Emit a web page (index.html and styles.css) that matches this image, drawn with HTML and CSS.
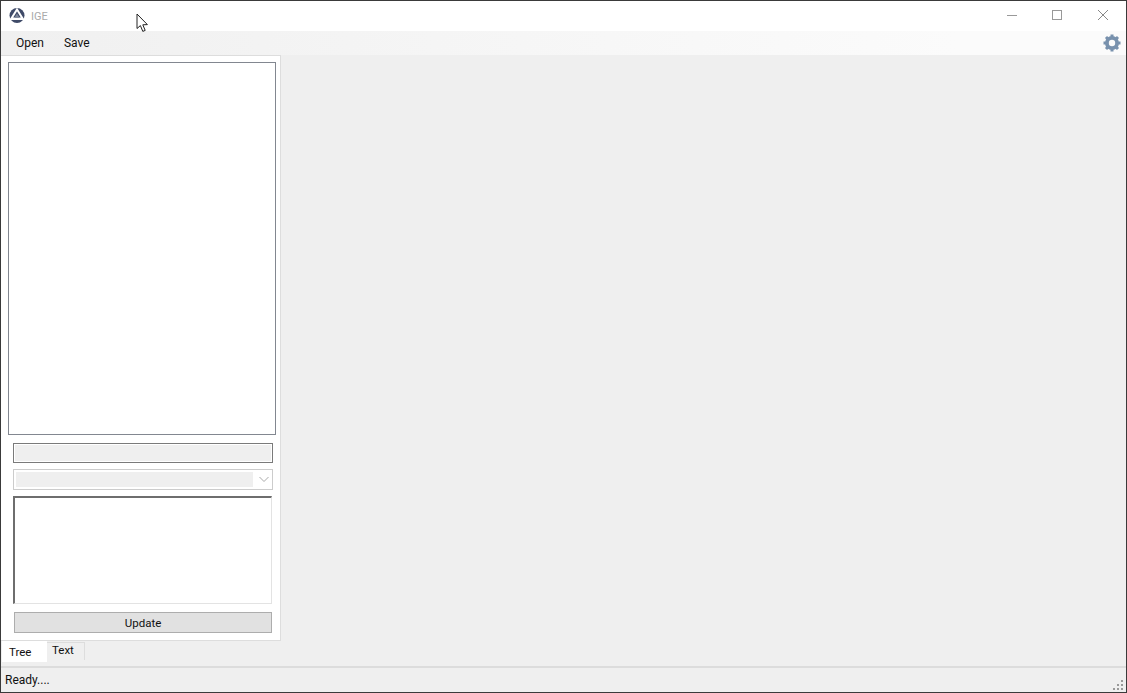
FILE: index.html
```html
<!DOCTYPE html>
<html lang="en">
<head>
    <meta charset="UTF-8">
    <title>IGE</title>
    <link rel="stylesheet" href="styles.css">
</head>
<body>
    <div class="window">
        <div class="titlebar">
            <svg class="logo" width="16" height="16" viewBox="0 0 16 16">
                <circle cx="8" cy="7.5" r="7.5" fill="#3f4a68"/>
                <path d="M8 1.5 L13.6 10.5 H2.4 Z" fill="none" stroke="#fff" stroke-width="2"/>
                <path d="M8 5.5 L10.6 9.8 H5.4 Z" fill="#7d8699"/>
                <path d="M0 11 H16 V12 H0 Z" fill="#fff"/>
            </svg>
            <span class="title">IGE</span>
            <svg class="cursor" width="14" height="20" viewBox="0 0 14 20">
                <path d="M1 1 V15.5 L4.4 12.6 L6.8 18.4 L9.2 17.4 L6.8 11.8 L11.4 11.6 Z" fill="#fff" stroke="#222" stroke-width="1"/>
            </svg>
            <div class="winbtns">
                <svg width="12" height="12" viewBox="0 0 12 12"><path d="M1 5.5 H11" stroke="#999" fill="none"/></svg>
                <svg width="12" height="12" viewBox="0 0 12 12"><rect x="1.5" y="0.5" width="9" height="9" stroke="#999" fill="none"/></svg>
                <svg width="12" height="12" viewBox="0 0 12 12"><path d="M1 0 L11 10 M11 0 L1 10" stroke="#888" fill="none"/></svg>
            </div>
        </div>
        <div class="menubar">
            <span class="menuitem">Open</span>
            <span class="menuitem">Save</span>
            <svg class="gear" width="18" height="18" viewBox="0 0 18 18">
                <circle cx="9" cy="9" r="5.2" fill="none" stroke="#7891ad" stroke-width="3.6"/>
                <path d="M9 0.5 V17.5 M0.5 9 H17.5 M3 3 L15 15 M15 3 L3 15" stroke="#7891ad" stroke-width="3"/>
                <circle cx="9" cy="9" r="3.2" fill="#fafafa"/>
            </svg>
        </div>
        <div class="content">
            <div class="sidebar">
                <div class="panel">
                    <div class="tree"></div>
                    <div class="field"></div>
                    <div class="combo">
                        <div class="combo-value"></div>
                        <svg width="12" height="7" viewBox="0 0 12 7"><path d="M1.5 1 L6 5.5 L10.5 1" stroke="#aaa" fill="none"/></svg>
                    </div>
                    <div class="memo"></div>
                    <div class="button">Update</div>
                </div>
                <div class="tabs">
                    <span class="tab active">Tree</span>
                    <span class="tab">Text</span>
                </div>
            </div>
        </div>
        <div class="statusbar">
            <span>Ready....</span>
            <svg class="grip" width="11" height="11" viewBox="0 0 11 11" fill="#999">
                <rect x="8" y="0" width="2" height="2"/>
                <rect x="4" y="4" width="2" height="2"/>
                <rect x="8" y="4" width="2" height="2"/>
                <rect x="0" y="8" width="2" height="2"/>
                <rect x="4" y="8" width="2" height="2"/>
                <rect x="8" y="8" width="2" height="2"/>
            </svg>
        </div>
    </div>
</body>
</html>
```
FILE: styles.css
```css
html, body {
    margin: 0;
    height: 100%;
    overflow: hidden;
}

body {
    font-family: Roboto, "Liberation Sans", sans-serif;
    font-size: 12px;
    color: #111;
}

.window {
    box-sizing: border-box;
    width: 1127px;
    height: 693px;
    border: 1px solid #3a3a3a;
    background: #efefef;
    display: flex;
    flex-direction: column;
    position: relative;
}

.titlebar {
    height: 30px;
    flex: none;
    background: #fff;
    display: flex;
    align-items: center;
    padding-left: 8px;
}

.logo {
    margin-right: 6px;
}

.title {
    color: #aaa;
    font-size: 11px;
}

.cursor {
    position: absolute;
    left: 135px;
    top: 12px;
}

.winbtns {
    margin-left: auto;
    display: flex;
    gap: 34px;
    padding-right: 17px;
}

.winbtns svg:first-child {
    margin-right: -1px;
}

.menubar {
    height: 24px;
    flex: none;
    display: flex;
    align-items: center;
    background: linear-gradient(90deg, #f0f0f0 0%, #fbfbfb 85%, #fbfbfb 100%);
    padding-left: 15px;
    gap: 20px;
}

.gear {
    margin-left: auto;
    margin-right: 5px;
}

.content {
    flex: 1;
    min-height: 0;
    display: flex;
}

.sidebar {
    width: 280px;
    display: flex;
    flex-direction: column;
}

.panel {
    box-sizing: border-box;
    flex: none;
    height: 586px;
    background: #fff;
    border-right: 1px solid #ddd;
    border-bottom: 1px solid #ddd;
    border-top: 1px solid #ddd;
    display: flex;
    flex-direction: column;
    padding: 6px 5px 0 7px;
}

.tree {
    box-sizing: border-box;
    width: 268px;
    height: 373px;
    border: 1px solid #828790;
    background: #fff;
}

.field {
    box-sizing: border-box;
    width: 260px;
    height: 20px;
    margin: 8px 0 0 5px;
    border: 1px solid #7a7a7a;
    box-shadow: inset 0 0 0 1px #fff;
    background: #efefef;
}

.combo {
    box-sizing: border-box;
    width: 260px;
    height: 21px;
    margin: 6px 0 0 5px;
    border: 1px solid #ccc;
    display: flex;
    align-items: center;
    padding: 2px;
    justify-content: space-between;
}

.combo-value {
    width: 237px;
    height: 15px;
    background: #efefef;
}

.memo {
    box-sizing: border-box;
    width: 259px;
    height: 108px;
    margin: 6px 0 0 5px;
    border: 1px solid #e3e3e3;
    border-top: 2px solid #6e6e6e;
    border-left: 2px solid #6e6e6e;
    background: #fff;
}

.button {
    box-sizing: border-box;
    width: 258px;
    height: 21px;
    margin: 8px 0 0 6px;
    border: 1px solid #adadad;
    background: #e1e1e1;
    text-align: center;
    font-size: 11.5px;
    line-height: 20px;
}

.tabs {
    display: flex;
    height: 21px;
    padding-left: 1px;
    font-size: 11.5px;
}

.tab {
    box-sizing: border-box;
    width: 38px;
    height: 18px;
    margin-top: 1px;
    padding: 0 0 0 5px;
    line-height: 15px;
    border: 1px solid #ddd;
    border-width: 1px 1px 0 0;
}

.tab.active {
    width: 45px;
    height: 21px;
    margin-top: 0;
    padding: 4px 0 0 7px;
    background: #fff;
    border: 0;
}

.statusbar {
    box-sizing: border-box;
    height: 26px;
    flex: none;
    border-top: 2px solid #dcdcdc;
    display: flex;
    align-items: center;
    justify-content: space-between;
    padding: 0 2px 0 4px;
}

.grip {
    align-self: flex-end;
    margin-bottom: 1px;
}
```
